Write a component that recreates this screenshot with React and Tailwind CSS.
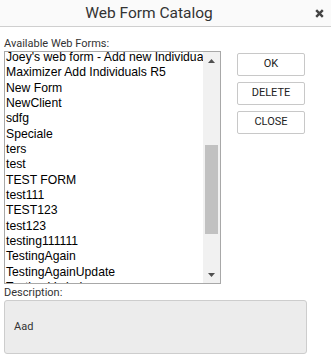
import React from 'react';

const forms = [
  "Joey's web form - Add new Individuals",
  'Maximizer Add Individuals R5',
  'New Form',
  'NewClient',
  'sdfg',
  'Speciale',
  'ters',
  'test',
  'TEST FORM',
  'test111',
  'TEST123',
  'test123',
  'testing111111',
  'TestingAgain',
  'TestingAgainUpdate',
  'Testing Variedes',
];

const roboto = { fontFamily: 'Roboto, "Noto Sans", sans-serif' };

const Button = ({ children }) => (
  <button
    className="w-[68px] h-[23px] bg-white border border-[#c8c8c8] rounded-[2px] text-[11px] text-[#222] flex items-center justify-center"
    style={roboto}
  >
    {children}
  </button>
);

export default function App() {
  return (
    <div className="w-[331px] h-[364px] bg-white overflow-hidden" style={roboto}>
      {/* barre de titre */}
      <div className="h-[27px] flex items-center border-b border-[#cfcfcf] bg-[#fafafa]">
        <div className="w-[298px] text-center text-[15.5px] text-[#333] leading-[20px]">Web Form Catalog</div>
        <div className="flex-1 flex justify-center pl-[10px]">
          <svg width="9" height="9" viewBox="0 0 9 9">
            <path d="M1.2 1.2 L7.8 7.8 M7.8 1.2 L1.2 7.8" stroke="#444" strokeWidth="2.4" strokeLinecap="butt" />
          </svg>
        </div>
      </div>

      <div className="px-[4px] pt-[10px]">
        <div className="text-[11px] leading-[13px] text-[#333]">Available Web Forms:</div>

        <div className="flex mt-[1px]">
          {/* liste */}
          <div className="w-[217px] h-[233px] border border-[#a8a8a8] flex overflow-hidden">
            <div className="flex-1 overflow-hidden" style={{ fontFamily: '"Liberation Sans", Arial, sans-serif' }}>
              <div className="-mt-[2px] pl-[1px]">
                {forms.map((f) => (
                  <div key={f} className="text-[12.2px] leading-[15.33px] text-black whitespace-nowrap">
                    {f}
                  </div>
                ))}
              </div>
            </div>
            <div className="w-[17px] bg-[#f1f1f1] flex flex-col items-center">
              <div className="h-[17px] flex items-center justify-center">
                <svg width="7" height="4" viewBox="0 0 7 4">
                  <path d="M3.5 0 L7 4 L0 4 Z" fill="#505050" />
                </svg>
              </div>
              <div className="mt-[76px] w-[13px] h-[89px] bg-[#c1c1c1]" />
              <div className="flex-1" />
              <div className="h-[17px] flex items-center justify-center">
                <svg width="7" height="4" viewBox="0 0 7 4">
                  <path d="M0 0 L7 0 L3.5 4 Z" fill="#505050" />
                </svg>
              </div>
            </div>
          </div>

          {/* boutons */}
          <div className="ml-[16px] mt-[2px] flex flex-col gap-[6px]">
            <Button>OK</Button>
            <Button>DELETE</Button>
            <Button>CLOSE</Button>
          </div>
        </div>

        <div className="mt-[2px] text-[11px] leading-[13px] text-[#333]">Description:</div>
        <div className="mt-[1px] w-[303px] h-[54px] bg-[#ececec] border border-[#cdcdcd] rounded-[3px] flex items-center pl-[9px] text-[11px] text-[#333]">
          Aad
        </div>
      </div>
    </div>
  );
}
